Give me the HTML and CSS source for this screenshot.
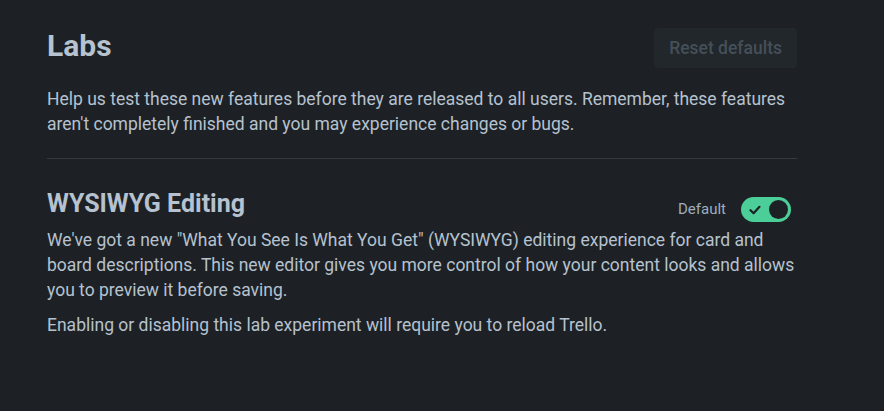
FILE: index.html
```html
<!DOCTYPE html>
<html lang="en">
<head>
    <meta charset="UTF-8" />
    <title>Labs</title>
    <link rel="stylesheet" href="styles.css">
</head>
<body>
    <div class="labs">
        <div class="labs-header">
            <h1>Labs</h1>
            <button class="reset" disabled>Reset defaults</button>
        </div>
        <p class="intro">Help us test these new features before they are released to all users. Remember, these features aren't completely finished and you may experience changes or bugs.</p>
        <hr class="divider" />
        <div class="feature">
            <div class="feature-header">
                <h2>WYSIWYG Editing</h2>
                <div class="feature-toggle">
                    <span class="toggle-label">Default</span>
                    <span class="toggle on">
                        <svg class="toggle-check" width="14" height="14" viewBox="0 0 14 14">
                            <path d="M2.5 7.2 L5.6 10.2 L11.5 3.8" fill="none" stroke="#1d2125" stroke-width="2.2" stroke-linecap="round" stroke-linejoin="round"/>
                        </svg>
                        <span class="toggle-knob"></span>
                    </span>
                </div>
            </div>
            <p>We've got a new "What You See Is What You Get" (WYSIWYG) editing experience for card and board descriptions. This new editor gives you more control of how your content looks and allows you to preview it before saving.</p>
            <p>Enabling or disabling this lab experiment will require you to reload Trello.</p>
        </div>
    </div>
</body>
</html>
```

FILE: styles.css
```css
body {
    margin: 0;
    background-color: #1d2125;
    color: #b6c2cf;
    font-family: Roboto, "Noto Sans", sans-serif;
    font-size: 17.5px;
    line-height: 25px;
}

.labs {
    width: 750px;
    padding: 25px 0 0 47px;
}

.labs-header {
    display: flex;
    justify-content: space-between;
    align-items: center;
    height: 44px;
    padding-top: 1px;
}

h1 {
    margin: 0 0 6px;
    font-size: 30px;
    font-weight: 700;
    color: #b6c2cf;
}

.reset {
    height: 40px;
    padding: 0 15px;
    border: none;
    border-radius: 4px;
    background-color: #22272b;
    color: #454f59;
    font-family: inherit;
    font-size: 17.5px;
    font-weight: 500;
}

.intro {
    margin: 17px 0 0;
}

.divider {
    margin: 21px 0 0;
    border: none;
    border-top: 1px solid #333a40;
}

.feature {
    padding-top: 28px;
}

.feature-header {
    display: flex;
    justify-content: space-between;
    align-items: center;
    height: 32px;
}

h2 {
    margin: 0;
    font-size: 25px;
    font-weight: 700;
    color: #b6c2cf;
}

.feature-toggle {
    display: flex;
    align-items: center;
    gap: 15px;
    padding-right: 6px;
    margin-top: 13px;
}

.toggle-label {
    font-size: 15px;
    color: #9fadbc;
}

.toggle {
    position: relative;
    display: flex;
    align-items: center;
    width: 50px;
    height: 25px;
    border-radius: 13px;
    background-color: #4bce97;
}

.toggle-check {
    margin-left: 7px;
}

.toggle-knob {
    position: absolute;
    right: 3px;
    top: 3px;
    width: 19px;
    height: 19px;
    border-radius: 50%;
    background-color: #1d2125;
}

.feature p {
    margin: 9px 0 0;
}

.feature p + p {
    margin-top: 10px;
}
```
